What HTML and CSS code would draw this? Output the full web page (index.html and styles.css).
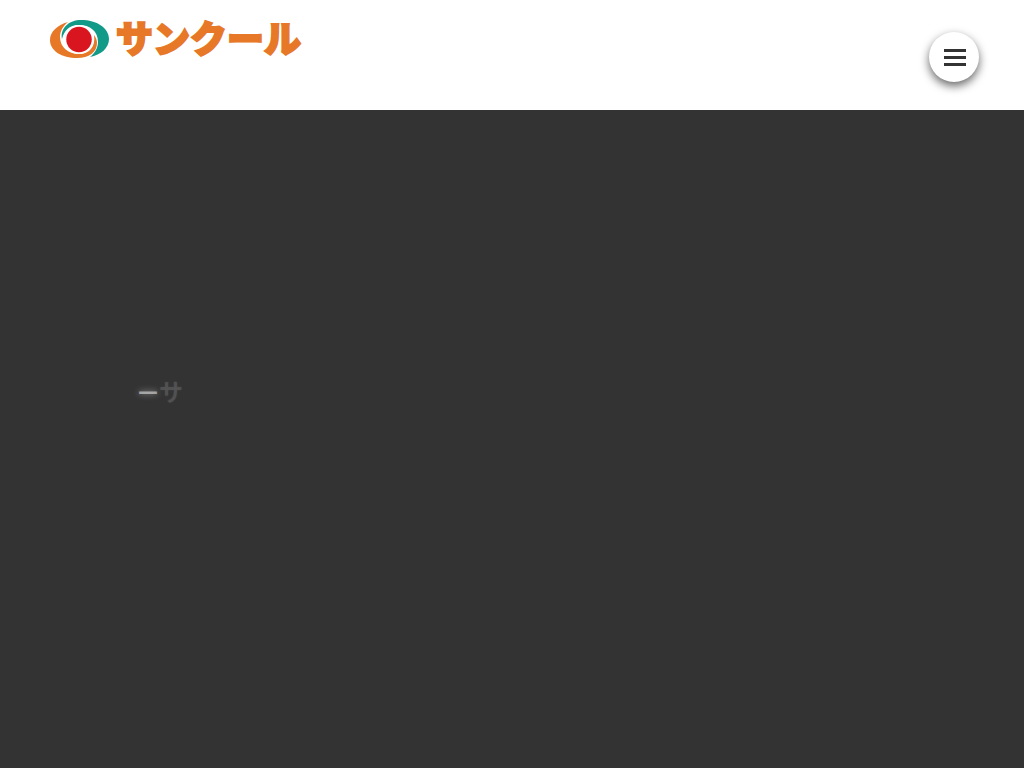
FILE: index.html
```html
<!DOCTYPE html>
<html lang="ja">
<head>
    <meta charset="UTF-8">
    <meta name="viewport" content="width=device-width, initial-scale=1.0">
    <title>サンクール</title>
    <link rel="stylesheet" href="styles.css">
</head>
<body>

    <header class="header">
        <a href="#" class="logo">
            <svg class="logo-mark" viewBox="0 0 60 38" aria-hidden="true">
                <path fill="#e67828" d="M18 2C7 5 0 12 0 20c0 11 12 18 27 18 12 0 20-6 20-15 0-3-1-5-3-8 2 12-5 19-15 19C18 34 10 27 10 17c0-6 3-11 8-15z"/>
                <path fill="#129a88" d="M12 19C10 8 19 0 31 0c16 0 28 8 28 19 0 9-8 16-19 18 5-4 8-9 8-15C48 11 40 5 29 5 19 5 14 11 12 19z"/>
                <circle fill="#fff" cx="29" cy="19.500" r="14.500"/>
                <circle fill="#d9161f" cx="29" cy="19.500" r="12.750"/>
            </svg>
            <span class="logo-text">サンクール</span>
        </a>
        <button type="button" class="menu-button" aria-label="メニュー">
            <span class="menu-line"></span>
            <span class="menu-line"></span>
            <span class="menu-line"></span>
        </button>
    </header>

    <main class="hero">
        <p class="hero-text"><span class="char-on">ー</span><span class="char-next">サ</span></p>
    </main>

</body>
</html>
```

FILE: styles.css
```css
* {
    box-sizing: border-box;
}
body {
    display: flex;
    flex-direction: column;
    min-height: 100vh;
    margin: 0;
    background-color: #fff;
    color: #333;
    font-family: "Noto Sans CJK JP", sans-serif;
}
.header {
    display: flex;
    align-items: flex-start;
    justify-content: space-between;
    height: 110px;
    padding: 20px 45px 0 50px;
}
.logo {
    display: flex;
    align-items: flex-start;
    gap: 6px;
    color: #e67828;
    text-decoration: none;
}
.logo-mark {
    width: 60px;
    height: 38px;
}
.logo-text {
    font-size: 37px;
    font-weight: 900;
    line-height: 34px;
    -webkit-text-stroke: 2px #e67828;
}
.menu-button {
    display: flex;
    flex-direction: column;
    align-items: center;
    justify-content: center;
    gap: 4px;
    width: 50px;
    height: 50px;
    margin-top: 12px;
    padding: 0 0 0 2px;
    border: none;
    border-radius: 50%;
    background-color: #fff;
    box-shadow: 0 4px 10px rgba(0, 0, 0, 0.6);
    cursor: pointer;
}
.menu-line {
    width: 22px;
    height: 3px;
    background-color: #333;
}
.hero {
    flex: 1;
    padding: 263px 137px 0;
    background-color: #333;
}
.hero-text {
    margin: 0;
    color: #fff;
    font-size: 24px;
    font-weight: 500;
    line-height: 36px;
}
.char-on {
    color: rgba(255, 255, 255, 0.5);
    font-size: 22px;
    text-shadow: 0 0 6px rgba(255, 255, 255, 0.5);
}
.char-next {
    color: rgba(255, 255, 255, 0.1);
    font-weight: 700;
    text-shadow: 0 0 2px rgba(255, 255, 255, 0.08);
}
```
